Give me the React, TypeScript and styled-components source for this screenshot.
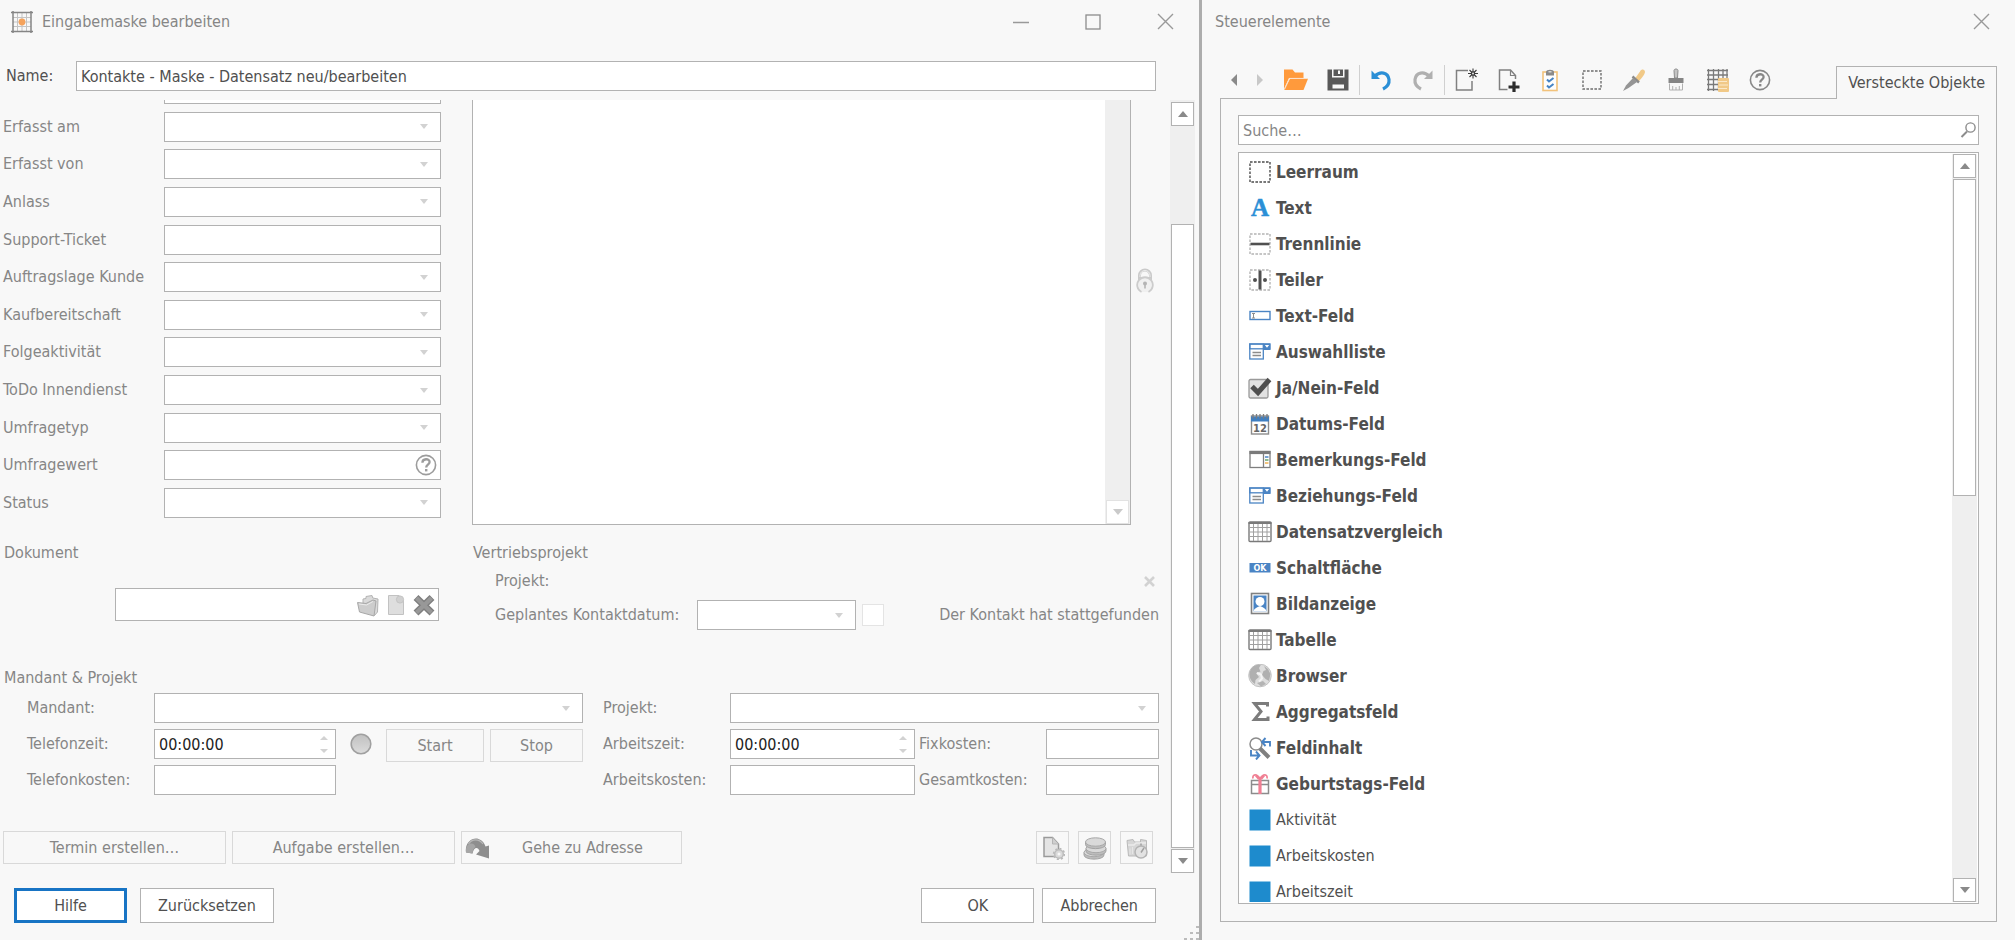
import React, { useId } from "react";
import styled, { createGlobalStyle, css } from "styled-components";

const font = `"DejaVu Sans Condensed", "DejaVu Sans", "Noto Sans", sans-serif`;
const color = {
  window: "#f8f8f8",
  field: "#ffffff",
  line: "#b2b2b2",
  lineSoft: "#d9d9d9",
  track: "#efefef",
  text: "#505050",
  muted: "#868686",
  accent: "#1874c4",
};

const GlobalStyle = createGlobalStyle`
  *, *::before, *::after { box-sizing: border-box; }
  body { margin: 0; background: ${color.window}; }
  button, input, select, textarea { font: inherit; color: inherit; margin: 0; padding: 0; border-radius: 0; opacity: 1; }
  body, button, input, select, textarea { font-family: ${font}; font-size: 16px; line-height: 22px; }
  svg { display: block; flex: none; }
`;

/* ---------- windows ---------- */

const Desktop = styled.div`
  display: grid;
  grid-template-columns: minmax(0, 1202fr) minmax(0, 813fr);
  height: 100vh;
  color: ${color.text};
`;

const Window = styled.section<{ $divided?: boolean }>`
  position: relative;
  display: flex;
  flex-direction: column;
  min-width: 0;
  min-height: 0;
  background: ${color.window};
  border-right: ${(p) => (p.$divided ? "3px solid #adadad" : "0")};
`;

const TitleBar = styled.header<{ $inset: number }>`
  display: flex;
  align-items: center;
  flex: none;
  height: 43px;
  padding: 0 16px 0 ${(p) => p.$inset}px;
  color: ${color.muted};
`;

const Title = styled.h1`
  flex: 1;
  margin: 0 0 0 8px;
  font-size: 16px;
  font-weight: 400;
  line-height: 22px;
`;

const TitleButtons = styled.div`
  display: flex;
`;

const TitleButton = styled.button`
  display: flex;
  align-items: center;
  justify-content: center;
  width: 72px;
  height: 43px;
  border: 0;
  background: none;
  &:last-child {
    width: 36px;
    margin-left: 18px;
  }
`;

const Grip = styled.svg`
  position: absolute;
  right: 0;
  bottom: 0;
`;

/* ---------- form parts ---------- */

const NameRow = styled.div`
  display: flex;
  align-items: center;
  flex: none;
  padding: 18px 43px 9px 6px;
`;

const NameLabel = styled.label`
  flex: none;
  width: 70px;
`;

const box = css`
  display: block;
  width: 100%;
  height: 30px;
  border: 1px solid ${color.line};
  background: ${color.field};
  outline: 0;
`;

const TextInput = styled.input`
  ${box}
  padding: 0 4px;
  &::placeholder {
    color: ${color.muted};
    opacity: 1;
  }
`;

const TimeInput = styled(TextInput)`
  color: #222222;
`;

const SelectBox = styled.select`
  ${box}
  appearance: none;
`;

const Control = styled.div<{ $grow?: string }>`
  position: relative;
  flex: ${(p) => p.$grow ?? "1"};
  min-width: 0;
`;

const Adornment = styled.span<{ $right: number }>`
  position: absolute;
  top: 0;
  bottom: 0;
  right: ${(p) => p.$right}px;
  display: flex;
  align-items: center;
  gap: 7px;
  pointer-events: none;
`;

const SpinArrows = styled.span`
  display: flex;
  flex-direction: column;
  gap: 9px;
`;

const FormArea = styled.div`
  display: flex;
  flex: 1;
  min-height: 0;
  padding-right: 4px;
`;

const Viewport = styled.div`
  flex: 1;
  min-width: 0;
  overflow: hidden;
  color: ${color.muted};
`;

const Scrolled = styled.form`
  margin-top: -26px;
`;

const Columns = styled.div`
  display: grid;
  grid-template-columns: 438px minmax(0, 1fr);
  column-gap: 31px;
  padding: 0 11px 0 3px;
`;

const FieldList = styled.div`
  display: flex;
  flex-direction: column;
  justify-content: space-between;
  padding-bottom: 7px;
`;

const FieldRow = styled.div`
  display: flex;
  align-items: center;
`;

const FieldLabel = styled.label<{ $width: number }>`
  flex: none;
  width: ${(p) => p.$width}px;
  white-space: nowrap;
`;

const NoteRow = styled.div`
  display: flex;
  align-items: center;
  gap: 5px;
  padding-right: 5px;
`;

const NoteFrame = styled.div`
  display: flex;
  flex: 1;
  height: 451px;
  border: 1px solid ${color.line};
  background: ${color.field};
`;

const NoteText = styled.textarea`
  flex: 1;
  min-width: 0;
  border: 0;
  background: none;
  resize: none;
  outline: 0;
`;

const IconSlot = styled.button`
  display: flex;
  align-items: center;
  justify-content: center;
  border: 0;
  background: none;
`;

const LockSlot = styled(IconSlot)`
  margin-bottom: 38px;
`;

const Group = styled.fieldset<{ $indent?: number }>`
  min-width: 0;
  margin: 0;
  padding: 0 0 0 ${(p) => p.$indent ?? 0}px;
  border: 0;
`;

const GroupTitle = styled.h2<{ $top: number }>`
  margin: ${(p) => p.$top}px 0 0 1px;
  font-size: 16px;
  font-weight: 400;
  line-height: 22px;
`;

const FileRow = styled.div`
  margin: 24px 2px 0 112px;
`;

const FileInput = styled(TextInput)`
  height: 33px;
`;

const ProjectRow = styled.div`
  display: flex;
  align-items: center;
  justify-content: space-between;
  margin: 6px 0 8px 23px;
  padding-right: 4px;
`;

const DateRow = styled.div`
  display: flex;
  align-items: center;
  margin-left: 23px;
`;

const DateSelect = styled.div`
  flex: 0 1 159px;
  min-width: 0;
`;

const CheckLabel = styled.label`
  display: flex;
  align-items: center;
  justify-content: space-between;
  flex: 1;
  margin-left: 6px;
  white-space: nowrap;
`;

const CheckBox = styled.input`
  appearance: none;
  width: 22px;
  height: 22px;
  border: 1px solid #e4e4e4;
  background: ${color.field};
`;

const Halves = styled.div`
  display: grid;
  grid-template-columns: minmax(0, 1fr) minmax(0, 1fr);
  column-gap: 20px;
  padding: 4px 11px 0 27px;
`;

const HalfRows = styled.div`
  display: flex;
  flex-direction: column;
  gap: 6px;
`;

const HalfRow = styled.div`
  display: flex;
  align-items: center;
  height: 30px;
`;

const Timer = styled.div`
  display: flex;
  align-items: flex-start;
  flex: 247;
  gap: 6px;
  height: 30px;
`;

const Lamp = styled.span`
  display: flex;
  align-items: center;
  height: 30px;
  margin: 0 8px 0 14px;
`;

/* ---------- buttons ---------- */

const FlatButton = styled.button<{ $basis?: string }>`
  display: flex;
  align-items: center;
  justify-content: center;
  position: relative;
  flex: ${(p) => p.$basis ?? "1"};
  height: 33px;
  border: 1px solid ${color.lineSoft};
  background: none;
  white-space: nowrap;
`;

const LeadIcon = styled.span`
  position: absolute;
  left: 3px;
`;

const ActionRow = styled.div`
  display: flex;
  gap: 6px;
  margin-top: 36px;
  padding: 0 17px 0 3px;
`;

const IconButtons = styled.div`
  display: flex;
  gap: 9px;
  margin-left: auto;
`;

const SquareButton = styled.button`
  display: flex;
  align-items: center;
  justify-content: center;
  width: 33px;
  height: 33px;
  border: 1px solid ${color.lineSoft};
  background: none;
`;

const Footer = styled.footer`
  display: flex;
  gap: 8px;
  flex: none;
  padding: 15px 43px 17px 14px;
`;

const DialogButton = styled.button<{ $primary?: boolean; $push?: boolean }>`
  height: 35px;
  min-width: 113px;
  padding: 0 17px;
  border: ${(p) => (p.$primary ? `3px solid ${color.accent}` : `1px solid ${color.line}`)};
  margin-left: ${(p) => (p.$push ? "auto" : "0")};
  margin-right: ${(p) => (p.$primary ? "5px" : "0")};
  background: ${color.field};
`;

/* ---------- scroll bars ---------- */

const Bar = styled.div<{ $top?: number }>`
  display: flex;
  flex-direction: column;
  flex: none;
  width: 25px;
  padding: ${(p) => p.$top ?? 2}px 1px 0;
  background: ${color.track};
`;

const BarButton = styled.button<{ $soft?: boolean }>`
  display: flex;
  align-items: center;
  justify-content: center;
  flex: none;
  height: 24px;
  border: 1px solid ${(p) => (p.$soft ? "#e2e2e2" : color.line)};
  background: ${color.field};
`;

const BarSpace = styled.div<{ $part: number }>`
  flex: ${(p) => p.$part};
`;

const BarThumb = styled.div<{ $part: number }>`
  flex: ${(p) => p.$part};
  margin: 1px 0;
  border: 1px solid ${color.line};
  background: ${color.field};
`;

/* ---------- controls window ---------- */

const ToolHeader = styled.div`
  display: flex;
  align-items: flex-end;
  justify-content: space-between;
  flex: none;
  height: 55px;
  padding: 0 18px 0 21px;
`;

const Toolbar = styled.div`
  display: flex;
  align-items: center;
  height: 36px;
`;

const ToolButton = styled.button<{ $width?: number }>`
  display: flex;
  align-items: center;
  justify-content: center;
  width: ${(p) => p.$width ?? 42}px;
  height: 36px;
  border: 0;
  background: none;
`;

const Separator = styled.span`
  width: 1px;
  height: 30px;
  background: #d0d0d0;
`;

const Tab = styled.button`
  position: relative;
  height: 33px;
  margin-bottom: -1px;
  padding: 0 11px;
  border: 1px solid ${color.line};
  border-bottom: 0;
  background: ${color.window};
  white-space: nowrap;
`;

const Panel = styled.div`
  display: flex;
  flex-direction: column;
  gap: 7px;
  flex: 1;
  min-height: 0;
  margin: 0 18px 18px;
  padding: 16px 17px 17px;
  border: 1px solid ${color.line};
`;

const ListFrame = styled.div`
  display: flex;
  flex: 1;
  min-height: 0;
  padding: 1px;
  border: 1px solid ${color.line};
  background: ${color.field};
`;

const List = styled.ul`
  flex: 1;
  min-width: 0;
  margin: 0;
  padding: 0 0 0 8px;
  overflow: hidden;
  list-style: none;
`;

const Item = styled.li<{ $strong: boolean }>`
  display: flex;
  align-items: center;
  gap: 4px;
  height: 36px;
  font-size: ${(p) => (p.$strong ? 17 : 16)}px;
  font-weight: ${(p) => (p.$strong ? 700 : 400)};
`;

/* ---------- icons ---------- */

type Tri = { dir: "up" | "down" | "left" | "right"; fill?: string; w?: number; h?: number };
const Triangle = ({ dir, fill = "#d2d2d2", w = 8, h = 5 }: Tri) => {
  const d = {
    up: `M0 ${h}L${w / 2} 0L${w} ${h}Z`,
    down: `M0 0H${w}L${w / 2} ${h}Z`,
    left: `M${w} 0V${h}L0 ${h / 2}Z`,
    right: `M0 0V${h}L${w} ${h / 2}Z`,
  }[dir];
  return (
    <svg width={w} height={h} viewBox={`0 0 ${w} ${h}`} aria-hidden>
      <path d={d} fill={fill} />
    </svg>
  );
};

const Svg = ({ s = 24, children }: { s?: number; children: React.ReactNode }) => (
  <svg width={s} height={s} viewBox={`0 0 ${s} ${s}`} fill="none" aria-hidden>
    {children}
  </svg>
);

const Cross = ({ s, stroke, w }: { s: number; stroke: string; w: number }) => (
  <Svg s={s}>
    <path d={`M1 1L${s - 1} ${s - 1}M${s - 1} 1L1 ${s - 1}`} stroke={stroke} strokeWidth={w} />
  </Svg>
);

const MaskIcon = () => (
  <Svg>
    <path d="M3 7.5H21M3 12H21M3 16.5H21M7.5 3V21M12 3V21M16.5 3V21" stroke="#c4c4c4" />
    <path d="M1 2.5H23M1 21.5H23M3 1V23M21 1V23" stroke="#858585" strokeWidth="1.5" />
    <circle cx="12" cy="12" r="3.4" fill="#f5a35c" />
  </Svg>
);

const HelpIcon = ({ stroke = "#888888" }: { stroke?: string }) => (
  <Svg>
    <circle cx="12" cy="12" r="9.6" stroke={stroke} strokeWidth="1.6" />
    <path d="M8.4 9.8c0-4.6 7.2-4.6 7.2-.7 0 2.600-3.400 2.600-3.400 5.300" stroke={stroke} strokeWidth="2.3" />
    <rect x="11" y="16" width="2.400" height="2.400" fill={stroke} />
  </Svg>
);

const LockIcon = () => (
  <svg width="18" height="26" viewBox="0 0 18 26" fill="none" aria-hidden>
    <path d="M3.5 12V7.5a5.500 5.500 0 0 1 11 0V12" stroke="#cacaca" strokeWidth="3" />
    <path d="M4 9V7.5a5 5 0 0 1 10 0V9" stroke="#ececec" />
    <path d="M5.500 24a7.800 7.800 0 1 1 7 0" stroke="#cccccc" strokeWidth="1.800" fill="#f0f0f0" />
    <circle cx="9" cy="15.500" r="2" fill="#b4b4b4" />
    <path d="M8.200 16h1.600v4.500H8.200z" fill="#b4b4b4" />
  </svg>
);

const GreyFolder = () => (
  <Svg>
    <path d="M7 10V6l3-.5V3.500L16 2.500l.8 2.500 5.200 1-.5 13-3 3.500z" fill="#dadada" stroke="#b4b4b4" />
    <path d="M1.500 9.500L10 10.500l7-3.500 3 1-2 15-14.500-4z" fill="#cdcdcd" stroke="#a8a8a8" />
    <path d="M3 11l7.500 1 6.500-3.500" stroke="#ebebeb" />
  </Svg>
);

const GreyDoc = () => (
  <svg width="18" height="24" viewBox="0 0 18 24" fill="none" aria-hidden>
    <path d="M1.500 2.500H12l4.500 5v14h-15z" fill="#dedede" stroke="#c2c2c2" />
    <circle cx="13" cy="6.500" r="3.600" fill="#d0d0d0" stroke="#c4c4c4" />
  </svg>
);

const DeleteIcon = () => (
  <Svg>
    <path d="M4 4.500L20 20M20 4.500L4 20" stroke="#7e7e7e" strokeWidth="7" />
    <path d="M4.500 5L19.500 19.500M19.500 5L4.500 19.500" stroke="#989898" strokeWidth="4.200" />
  </Svg>
);

const LampIcon = () => {
  const id = useId();
  return (
    <Svg s={22}>
      <linearGradient id={id} x2="0" y2="1">
        <stop offset="0" stopColor="#c0c0c0" />
        <stop offset="1" stopColor="#dcdcdc" />
      </linearGradient>
      <circle cx="11" cy="11" r="9.800" fill={`url(#${id})`} stroke="#a0a0a0" strokeWidth="1.600" />
    </Svg>
  );
};

const JumpIcon = () => (
  <Svg>
    <path d="M1 16.500C-.5 7 7 1 13.500 3c4 1.300 6 4.500 7 7.500l3.500-1V22.500L11 18.500l3.500-3.500C13 10.500 9 10.500 7.500 17.500z" fill="#8e8e8e" />
    <path d="M1 16.500C.5 11 2.500 8 6 7.500c2.500.2 4 1.500 4.500 3.500-1.800 1-2.700 3.500-3 6.500z" fill="#a6a6a6" />
    <path d="M3.500 8C7 2.500 14 2.500 18 8" stroke="#b8b8b8" strokeWidth="1.200" />
  </Svg>
);

const DocGearIcon = () => (
  <Svg>
    <path d="M3 1.500H11.500l6 6.500V20.500H3z" fill="#e4e4e4" stroke="#9a9a9a" strokeWidth="1.500" />
    <path d="M11.500 1.500V8h6" fill="#cfcfcf" stroke="#b4b4b4" />
    <circle cx="18" cy="18" r="4.300" fill="#dadada" stroke="#bdbdbd" strokeWidth="1.500" />
    <circle cx="18" cy="18" r="5.400" stroke="#b8b8b8" strokeWidth="1.500" strokeDasharray="2.100 2.100" />
    <circle cx="18" cy="18" r="1.500" fill="#f8f8f8" />
  </Svg>
);

const CoinsIcon = () => (
  <Svg>
    {[
      [11, 16.5],
      [13, 12.500],
      [12.500, 6],
    ].map(([x, y]) => (
      <g key={y}>
        <path d={`M${x - 10} ${y}v2.500c0 5.500 20 5.500 20 0v-2.500z`} fill="#bdbdbd" stroke="#a4a4a4" />
        <ellipse cx={x} cy={y} rx="10" ry="4.200" fill="#d9d9d9" stroke="#a8a8a8" />
      </g>
    ))}
  </Svg>
);

const ClockFolderIcon = () => (
  <Svg>
    <path d="M2 4.500L8 3.500 9.500 6h6V3.500l6 1V20L3.500 20z" fill="#d6d6d6" stroke="#bababa" />
    <path d="M3 9h6l2-2h10" stroke="#ebebeb" strokeWidth="1.500" />
    <circle cx="16" cy="16" r="6" fill="#e2e2e2" stroke="#b4b4b4" strokeWidth="1.500" />
    <path d="M16 16.500l3-4.500M16 9.500v-2" stroke="#a0a0a0" strokeWidth="1.500" />
    <path d="M5 12.500v6M7.500 11v7" stroke="#e6e6e6" />
  </Svg>
);

const FolderIcon = () => (
  <svg width="26" height="24" viewBox="0 0 26 24" aria-hidden>
    <path d="M1 1.500h8.500l2.500 3h8.500V10H6L1 21z" fill="#ff9a3c" />
    <path d="M7 10.800h18L20.500 22H1z" fill="#ff9a3c" />
    <path d="M1.500 21.500L6.500 10.400H21" stroke="#fbe0c8" strokeWidth=".9" fill="none" />
  </svg>
);

const SaveIcon = () => (
  <Svg>
    <path fillRule="evenodd" d="M1.500 1.500H6v8h12.500V1.500H22.500v21h-21zM6.500 16.500v4h11.500v-4z" fill="#585858" />
    <path fillRule="evenodd" d="M7.500 1.500h9.500v6.500H7.500zM12 2.500v3.500h2V2.500z" fill="#585858" />
  </Svg>
);

const UndoIcon = ({ fill, flip }: { fill: string; flip?: boolean }) => (
  <Svg>
    <g transform={flip ? "matrix(-1 0 0 1 24 0)" : undefined}>
      <path d="M2.500 2.500v8.500h8.500z" fill={fill} />
      <path d="M6 8c5-5 13-4 14 3.500.5 4-2 7.500-6 9.500" stroke={fill} strokeWidth="3.200" />
    </g>
  </Svg>
);

const NewDocIcon = () => (
  <Svg>
    <path d="M14 2.500H2.500v19.500h15.500V13" stroke="#808080" strokeWidth="1.500" />
    <path d="M19 .5v10M14 5.500h10M15.500 2l7 7M22.500 2l-7 7" stroke="#3c3c3c" strokeWidth="1.100" />
    <circle cx="19" cy="5.500" r="2.200" fill="#3c3c3c" />
    <circle cx="19" cy="5.500" r=".9" fill="#f8f8f8" />
  </Svg>
);

const AddDocIcon = () => (
  <Svg>
    <path d="M11.500 21.500H3.500V2h11l5 5.500V11" stroke="#808080" strokeWidth="1.500" />
    <path d="M14.500 2v5.500H20" stroke="#808080" strokeWidth="1.200" />
    <path d="M18 13.500v10.500M12.500 19h11" stroke="#2c2c2c" strokeWidth="3.200" />
  </Svg>
);

const ClipboardIcon = () => (
  <Svg>
    <rect x="5" y="4" width="14" height="18.500" stroke="#f2c27b" strokeWidth="1.600" fill="#fdfdfd" />
    <path d="M8 7.500V4c0-3 8-3 8 0v3.500z" fill="#8a8a8a" />
    <path d="M10.500 3.800h3" stroke="#e8e8e8" strokeWidth="1.200" />
    <path d="M9 11.500l2 2 4.500-3.500M9 17.500l2 2 4.500-3.500" stroke="#4583c4" strokeWidth="2" />
  </Svg>
);

const DashedBox = ({ stroke, inset = 2 }: { stroke: string; inset?: number }) => (
  <rect x={inset} y={inset} width={24 - 2 * inset} height={24 - 2 * inset} stroke={stroke} strokeWidth="1.400" strokeDasharray="2.600 1.400" />
);

const DropperIcon = () => (
  <Svg>
    <path d="M13 10.500l5-7c1.500-3 5-2.500 5 .5 0 2.500-5.500 8.500-7 10.500z" fill="#f1c987" />
    <path d="M10.500 8.500l6.500 6" stroke="#8a8a8a" strokeWidth="2.400" />
    <path d="M11 10L4 17.500 1 23l5.500-3L15 14z" fill="#959595" />
  </Svg>
);

const BrushIcon = () => (
  <Svg>
    <path d="M10.500 10L10 2.500C10 .5 14 .5 14 2.500L13.500 10z" fill="#c4c4c4" stroke="#8c8c8c" />
    <rect x="4.500" y="10" width="15" height="5" fill="#858585" />
    <path d="M5.500 15.500V22h13v-6.500M8.700 18v4M12 19v3M15.300 18v4" stroke="#b0b0b0" />
  </Svg>
);

const GridDataIcon = () => (
  <Svg>
    <path d="M1 2.500H22M1 7H22M1 11.500H22M1 16.500H14M1 21.500H14M2.500 1V23M7.500 1V23M12.500 1V23M17 1V12M21 1V12" stroke="#7a7a7a" strokeWidth="1.300" />
    <rect x="12" y="10" width="11" height="14" rx="1" fill="#f1c987" />
    <path d="M12 13.500h9M13 17h9M12 20.500h9" stroke="#fbe9c9" />
  </Svg>
);

const SearchIcon = () => (
  <Svg s={18}>
    <circle cx="11.500" cy="6.500" r="4.600" stroke="#8c8c8c" strokeWidth="1.400" />
    <path d="M8 10.500L2.500 16" stroke="#8c8c8c" strokeWidth="2" />
  </Svg>
);

const SelectIcon = () => (
  <Svg>
    <rect x="1.800" y="4" width="13.500" height="15" stroke="#4a84c4" strokeWidth="1.300" />
    <rect x="1.800" y="4" width="20" height="4.800" stroke="#4a84c4" strokeWidth="1.300" />
    <rect x="15.500" y="3.500" width="7" height="6.500" fill="#4a84c4" />
    <path d="M16.800 5h4.400L19 7.800z" fill="#fff" />
    <path d="M4.500 12.500h8.500M4.500 15.500h8.500" stroke="#8c8c8c" strokeWidth="1.300" />
  </Svg>
);

const TableIcon = () => (
  <Svg>
    <rect x="1" y="2" width="22" height="19.500" rx="1" stroke="#7a7a7a" strokeWidth="1.400" />
    <path d="M.5 3h23" stroke="#7a7a7a" strokeWidth="2" />
    <path d="M1 7.500H23M1 12H23M1 16.500H23M5.500 4V21M10 4V21M14.500 4V21M19 4V21" stroke="#a0a0a0" />
  </Svg>
);

const itemIcons: Record<string, React.ReactNode> = {
  space: <Svg><DashedBox stroke="#4c4c4c" /></Svg>,
  text: (
    <Svg>
      <text x="12" y="19.500" textAnchor="middle" fontFamily="Liberation Serif, serif" fontSize="25" stroke="#2b8fd6" strokeWidth=".5" fill="#2b8fd6">A</text>
    </Svg>
  ),
  line: <Svg><DashedBox stroke="#b4b4b4" /><path d="M2.500 12h19" stroke="#505050" strokeWidth="2.600" /></Svg>,
  split: (
    <Svg>
      <DashedBox stroke="#b4b4b4" />
      <path d="M12 2.500v19" stroke="#505050" strokeWidth="3" />
      <circle cx="7" cy="12" r="2" fill="#505050" />
      <circle cx="17" cy="12" r="2" fill="#505050" />
    </Svg>
  ),
  input: (
    <Svg>
      <rect x="2" y="7.500" width="20" height="8" stroke="#4a84c4" strokeWidth="1.400" fill="#fff" />
      <path d="M4 9.500h3M4 14h3M5.500 9.500v4.500" stroke="#8c8c8c" />
    </Svg>
  ),
  select: <SelectIcon />,
  check: (
    <Svg>
      <rect x="1" y="3.500" width="19" height="18.500" rx="1.500" fill="#e2e2e2" stroke="#9a9a9a" strokeWidth="1.300" />
      <path d="M4 10.500l6 6L21.500 3.500" stroke="#4f4f4f" strokeWidth="5" />
    </Svg>
  ),
  date: (
    <Svg>
      <rect x="3.500" y="4" width="17" height="18" stroke="#8c8c8c" strokeWidth="1.400" fill="#fff" />
      <rect x="3" y="4.500" width="18" height="5" fill="#3f7fc1" />
      <path d="M5 2v4.500M8.500 2v4.500M12 2v4.500M15.500 2v4.500M19 2v4.500" stroke="#7c7c7c" strokeWidth="1.300" />
      <text x="12" y="19.500" textAnchor="middle" fontFamily="DejaVu Sans, sans-serif" fontSize="10" fill="#666666">12</text>
    </Svg>
  ),
  note: (
    <Svg>
      <rect x="2" y="3.500" width="20" height="16" stroke="#7f7f7f" strokeWidth="1.300" fill="#fff" />
      <path d="M1.500 4.500h21" stroke="#7a7a7a" strokeWidth="3.200" />
      <path d="M15.500 6v14" stroke="#7f7f7f" strokeWidth="1.300" />
      <path d="M17 9h3.500" stroke="#4a84c4" strokeWidth="1.500" />
      <path d="M17 12h3.500" stroke="#6aa56a" strokeWidth="1.500" />
      <path d="M17 15h3.500" stroke="#f0b050" strokeWidth="1.500" />
    </Svg>
  ),
  table: <TableIcon />,
  button: (
    <Svg>
      <rect x="1.500" y="7" width="21" height="9.500" fill="#4a84c4" />
      <text x="12" y="14.800" textAnchor="middle" fontFamily="DejaVu Sans, sans-serif" fontSize="8" fontWeight="700" fill="#ffffff">OK</text>
    </Svg>
  ),
  image: (
    <Svg>
      <rect x="3.500" y="1.500" width="17" height="20" stroke="#808080" strokeWidth="1.600" fill="#fff" />
      <rect x="5.500" y="3.500" width="13" height="16" fill="#4a84c4" />
      <circle cx="12" cy="9.500" r="4.500" fill="#fff" />
      <path d="M5.500 19.500c.5-3 3.500-4 6.500-5.500 3 1.500 6 2.500 6.500 5.500z" fill="#fff" />
    </Svg>
  ),
  globe: (
    <Svg>
      <circle cx="12" cy="11.500" r="11.300" fill="#dedede" stroke="#c2c2c2" />
      <path d="M2.500 6C5 1.500 9 .5 13 .8L11 4 12.500 7.500 8 9l3 4-3.500 3L7 20C2 17 0 11 2.500 6z" fill="#b0b0b0" />
      <path d="M16 2l4 3 2.500 5-1.500 7-3.500-2-3.500-4 1.500-4 2.500-1z" fill="#b0b0b0" />
      <path d="M9 19l6-2 3 3-5 2.500z" fill="#b4b4b4" />
      <path d="M9 9l4 1.500 1 4-3 3" stroke="#f4f4f4" strokeWidth="2" />
    </Svg>
  ),
  sum: (
    <Svg>
      <path d="M19.500 6.500V3.500H6.500l6.500 8L6.500 19.500H20V16.500" stroke="#7c7c7c" strokeWidth="3" />
    </Svg>
  ),
  lookup: (
    <Svg>
      <circle cx="8" cy="8" r="6" stroke="#8c8c8c" strokeWidth="1.500" />
      <path d="M12 12.500L21 21.500" stroke="#808080" strokeWidth="4" />
      <path d="M22 10.500V6H14M17.500 2L14 6l3.500 4" stroke="#4a84c4" strokeWidth="1.900" />
      <path d="M3 14v5.500H11M8 15.500l3.500 4L8 23.500" stroke="#4a84c4" strokeWidth="1.900" />
    </Svg>
  ),
  gift: (
    <Svg>
      <path d="M3.500 8.500h17v13h-17zM3.500 12.500h17" stroke="#8c8c8c" strokeWidth="1.500" fill="#fff" />
      <path d="M12 6v16" stroke="#f07f93" strokeWidth="3.200" />
      <path d="M12 7C9 1 4 2 5 6.500M12 7c3-6 8-5 7-.5M7.500 3.500l3 3.500M16.500 3.500l-3 3.500" stroke="#f07f93" strokeWidth="1.700" />
    </Svg>
  ),
  field: <Svg><rect x="1.500" y="1.500" width="21" height="21" fill="#1e8bcd" /></Svg>,
};

/* ---------- composed pieces ---------- */

type ScrollProps = { before: number; thumb: number; after: number; top?: number };
const Scrollbar = ({ before, thumb, after, top }: ScrollProps) => (
  <Bar $top={top}>
    <BarButton type="button" aria-label="Nach oben">
      <Triangle dir="up" fill="#8a8a8a" w={10} h={6} />
    </BarButton>
    {before > 0 && <BarSpace $part={before} />}
    <BarThumb $part={thumb} />
    {after > 0 && <BarSpace $part={after} />}
    <BarButton type="button" aria-label="Nach unten">
      <Triangle dir="down" fill="#8a8a8a" w={10} h={6} />
    </BarButton>
  </Bar>
);

const DropDown = ({ id, label }: { id?: string; label?: string }) => (
  <Control>
    <SelectBox id={id} aria-label={label} disabled />
    <Adornment $right={13}>
      <Triangle dir="down" />
    </Adornment>
  </Control>
);

const TimeField = ({ id, grow }: { id: string; grow: string }) => (
  <Control $grow={grow}>
    <TimeInput id={id} defaultValue="00:00:00" />
    <Adornment $right={8}>
      <SpinArrows>
        <Triangle dir="up" w={8} h={4} />
        <Triangle dir="down" w={8} h={4} />
      </SpinArrows>
    </Adornment>
  </Control>
);

type Kind = "select" | "text" | "help";

const fields: [string, Kind][] = [
  ["Erfasst am", "select"],
  ["Erfasst von", "select"],
  ["Anlass", "select"],
  ["Support-Ticket", "text"],
  ["Auftragslage Kunde", "select"],
  ["Kaufbereitschaft", "select"],
  ["Folgeaktivität", "select"],
  ["ToDo Innendienst", "select"],
  ["Umfragetyp", "select"],
  ["Umfragewert", "help"],
  ["Status", "select"],
];

const FormField = ({ label, kind }: { label: string; kind: Kind }) => {
  const id = useId();
  return (
    <FieldRow>
      <FieldLabel $width={161} htmlFor={id}>
        {label}
      </FieldLabel>
      {kind === "select" ? (
        <DropDown id={id} />
      ) : (
        <Control>
          <TextInput id={id} disabled />
          {kind === "help" && (
            <Adornment $right={3}>
              <HelpIcon stroke="#9c9c9c" />
            </Adornment>
          )}
        </Control>
      )}
    </FieldRow>
  );
};

const items: [string, string, boolean][] = [
  ["Leerraum", "space", true],
  ["Text", "text", true],
  ["Trennlinie", "line", true],
  ["Teiler", "split", true],
  ["Text-Feld", "input", true],
  ["Auswahlliste", "select", true],
  ["Ja/Nein-Feld", "check", true],
  ["Datums-Feld", "date", true],
  ["Bemerkungs-Feld", "note", true],
  ["Beziehungs-Feld", "select", true],
  ["Datensatzvergleich", "table", true],
  ["Schaltfläche", "button", true],
  ["Bildanzeige", "image", true],
  ["Tabelle", "table", true],
  ["Browser", "globe", true],
  ["Aggregatsfeld", "sum", true],
  ["Feldinhalt", "lookup", true],
  ["Geburtstags-Feld", "gift", true],
  ["Aktivität", "field", false],
  ["Arbeitskosten", "field", false],
  ["Arbeitszeit", "field", false],
];

const CostLabel = styled(FieldLabel)`
  padding-left: 4px;
`;

const Indented = styled.span`
  padding-left: 22px;
`;

const MaskEditor = () => (
  <Window $divided>
    <TitleBar $inset={10}>
      <MaskIcon />
      <Title>Eingabemaske bearbeiten</Title>
      <TitleButtons>
        <TitleButton aria-label="Minimieren">
          <Svg s={16}><path d="M0 8.500h16" stroke="#999999" strokeWidth="1.500" /></Svg>
        </TitleButton>
        <TitleButton aria-label="Maximieren">
          <Svg s={16}><rect x="1" y="1" width="14" height="14" stroke="#8c8c8c" strokeWidth="1.300" /></Svg>
        </TitleButton>
        <TitleButton aria-label="Schließen">
          <Cross s={17} stroke="#999999" w={1.4} />
        </TitleButton>
      </TitleButtons>
    </TitleBar>

    <NameRow>
      <NameLabel htmlFor="mask-name">Name:</NameLabel>
      <TextInput id="mask-name" defaultValue="Kontakte - Maske - Datensatz neu/bearbeiten" />
    </NameRow>

    <FormArea>
      <Viewport>
        <Scrolled onSubmit={(e) => e.preventDefault()}>
          <Columns>
            <FieldList>
              <FieldRow>
                <FieldLabel $width={161} as="span" />
                <DropDown label="Kontaktart" />
              </FieldRow>
              {fields.map(([label, kind]) => (
                <FormField key={label} label={label} kind={kind} />
              ))}
            </FieldList>
            <NoteRow>
              <NoteFrame>
                <NoteText aria-label="Bemerkung" disabled />
                <Bar>
                  <BarSpace $part={1} />
                  <BarButton $soft type="button" disabled aria-label="Nach unten">
                    <Triangle dir="down" fill="#cacaca" w={10} h={6} />
                  </BarButton>
                </Bar>
              </NoteFrame>
              <LockSlot type="button" aria-label="Sperren">
                <LockIcon />
              </LockSlot>
            </NoteRow>
          </Columns>

          <Columns>
            <Group>
              <GroupTitle $top={17}>Dokument</GroupTitle>
              <FileRow>
                <Control>
                  <FileInput aria-label="Dokument" disabled />
                  <Adornment $right={3}>
                    <GreyFolder />
                    <GreyDoc />
                    <DeleteIcon />
                  </Adornment>
                </Control>
              </FileRow>
            </Group>
            <Group>
              <GroupTitle $top={17}>Vertriebsprojekt</GroupTitle>
              <ProjectRow>
                <span>Projekt:</span>
                <IconSlot type="button" aria-label="Projekt entfernen">
                  <Cross s={11} stroke="#d2d2d2" w={2.6} />
                </IconSlot>
              </ProjectRow>
              <DateRow>
                <FieldLabel $width={202} htmlFor="planned">
                  Geplantes Kontaktdatum:
                </FieldLabel>
                <DateSelect>
                  <DropDown id="planned" />
                </DateSelect>
                <CheckLabel>
                  <CheckBox type="checkbox" disabled />
                  Der Kontakt hat stattgefunden
                </CheckLabel>
              </DateRow>
            </Group>
          </Columns>

          <Group $indent={3}>
            <GroupTitle $top={37}>Mandant &amp; Projekt</GroupTitle>
          </Group>
          <Halves>
            <HalfRows>
              <HalfRow>
                <FieldLabel $width={127} htmlFor="client">Mandant:</FieldLabel>
                <DropDown id="client" />
              </HalfRow>
              <HalfRow>
                <FieldLabel $width={127} htmlFor="phone-time">Telefonzeit:</FieldLabel>
                <TimeField id="phone-time" grow="182" />
                <Timer>
                  <Lamp>
                    <LampIcon />
                  </Lamp>
                  <FlatButton type="button" $basis="98">Start</FlatButton>
                  <FlatButton type="button" $basis="93">Stop</FlatButton>
                </Timer>
              </HalfRow>
              <HalfRow>
                <FieldLabel $width={127} htmlFor="phone-cost">Telefonkosten:</FieldLabel>
                <Control $grow="182">
                  <TextInput id="phone-cost" disabled />
                </Control>
                <BarSpace $part={247} />
              </HalfRow>
            </HalfRows>
            <HalfRows>
              <HalfRow>
                <FieldLabel $width={127} htmlFor="project">Projekt:</FieldLabel>
                <DropDown id="project" />
              </HalfRow>
              {[
                ["Arbeitszeit:", "Fixkosten:"],
                ["Arbeitskosten:", "Gesamtkosten:"],
              ].map(([first, second], i) => (
                <HalfRow key={first}>
                  <FieldLabel $width={127} htmlFor={first}>{first}</FieldLabel>
                  {i === 0 ? (
                    <TimeField id={first} grow="185" />
                  ) : (
                    <Control $grow="185">
                      <TextInput id={first} disabled />
                    </Control>
                  )}
                  <CostLabel $width={131} htmlFor={second}>{second}</CostLabel>
                  <Control $grow="113">
                    <TextInput id={second} disabled />
                  </Control>
                </HalfRow>
              ))}
            </HalfRows>
          </Halves>

          <ActionRow>
            <FlatButton type="button" $basis="0 1 223px">Termin erstellen…</FlatButton>
            <FlatButton type="button" $basis="0 1 223px">Aufgabe erstellen…</FlatButton>
            <FlatButton type="button" $basis="0 1 221px">
              <LeadIcon>
                <JumpIcon />
              </LeadIcon>
              <Indented>Gehe zu Adresse</Indented>
            </FlatButton>
            <IconButtons>
              <SquareButton type="button" aria-label="Dokumentoptionen"><DocGearIcon /></SquareButton>
              <SquareButton type="button" aria-label="Kosten"><CoinsIcon /></SquareButton>
              <SquareButton type="button" aria-label="Zeiterfassung"><ClockFolderIcon /></SquareButton>
            </IconButtons>
          </ActionRow>
        </Scrolled>
      </Viewport>
      <Scrollbar before={97} thumb={625} after={0} />
    </FormArea>

    <Footer>
      <DialogButton type="button" $primary>Hilfe</DialogButton>
      <DialogButton type="button">Zurücksetzen</DialogButton>
      <DialogButton type="button" $push>OK</DialogButton>
      <DialogButton type="button">Abbrechen</DialogButton>
    </Footer>
    <Grip width="16" height="16" viewBox="0 0 16 16" aria-hidden>
      <path d="M13 2h3v2h-3zM7 8h3v2h-3zM13 8h3v2h-3zM1 14h3v2h-3zM7 14h3v2h-3zM13 14h3v2h-3z" fill="#bcbcbc" />
    </Grip>
  </Window>
);

const ControlsWindow = () => (
  <Window>
    <TitleBar $inset={5}>
      <Title>Steuerelemente</Title>
      <TitleButtons>
        <TitleButton aria-label="Schließen">
          <Cross s={17} stroke="#999999" w={1.4} />
        </TitleButton>
      </TitleButtons>
    </TitleBar>
    <ToolHeader>
      <Toolbar>
        <ToolButton $width={22} aria-label="Zurück"><Triangle dir="left" fill="#8a8a8a" w={6} h={12} /></ToolButton>
        <ToolButton $width={30} aria-label="Vorwärts"><Triangle dir="right" fill="#c8c8c8" w={6} h={12} /></ToolButton>
        <ToolButton aria-label="Öffnen"><FolderIcon /></ToolButton>
        <ToolButton aria-label="Speichern"><SaveIcon /></ToolButton>
        <Separator />
        <ToolButton aria-label="Rückgängig"><UndoIcon fill="#2b8fd6" /></ToolButton>
        <ToolButton aria-label="Wiederholen"><UndoIcon fill="#b0b0b0" flip /></ToolButton>
        <Separator />
        <ToolButton aria-label="Neu"><NewDocIcon /></ToolButton>
        <ToolButton aria-label="Hinzufügen"><AddDocIcon /></ToolButton>
        <ToolButton aria-label="Prüfliste"><ClipboardIcon /></ToolButton>
        <ToolButton aria-label="Auswahl"><Svg><DashedBox stroke="#6e6e6e" inset={3} /></Svg></ToolButton>
        <ToolButton aria-label="Pipette"><DropperIcon /></ToolButton>
        <ToolButton aria-label="Pinsel"><BrushIcon /></ToolButton>
        <ToolButton aria-label="Raster"><GridDataIcon /></ToolButton>
        <ToolButton aria-label="Hilfe"><HelpIcon /></ToolButton>
      </Toolbar>
      <Tab type="button">Versteckte Objekte</Tab>
    </ToolHeader>
    <Panel>
      <Control $grow="none">
        <TextInput type="text" aria-label="Suche" placeholder="Suche…" />
        <Adornment $right={2}>
          <SearchIcon />
        </Adornment>
      </Control>
      <ListFrame>
        <List>
          {items.map(([name, icon, strong]) => (
            <Item key={name} $strong={strong}>
              {itemIcons[icon]}
              <span>{name}</span>
            </Item>
          ))}
        </List>
        <Scrollbar before={0} thumb={316} after={382} top={0} />
      </ListFrame>
    </Panel>
  </Window>
);

export default function App() {
  return (
    <>
      <GlobalStyle />
      <Desktop>
        <MaskEditor />
        <ControlsWindow />
      </Desktop>
    </>
  );
}
